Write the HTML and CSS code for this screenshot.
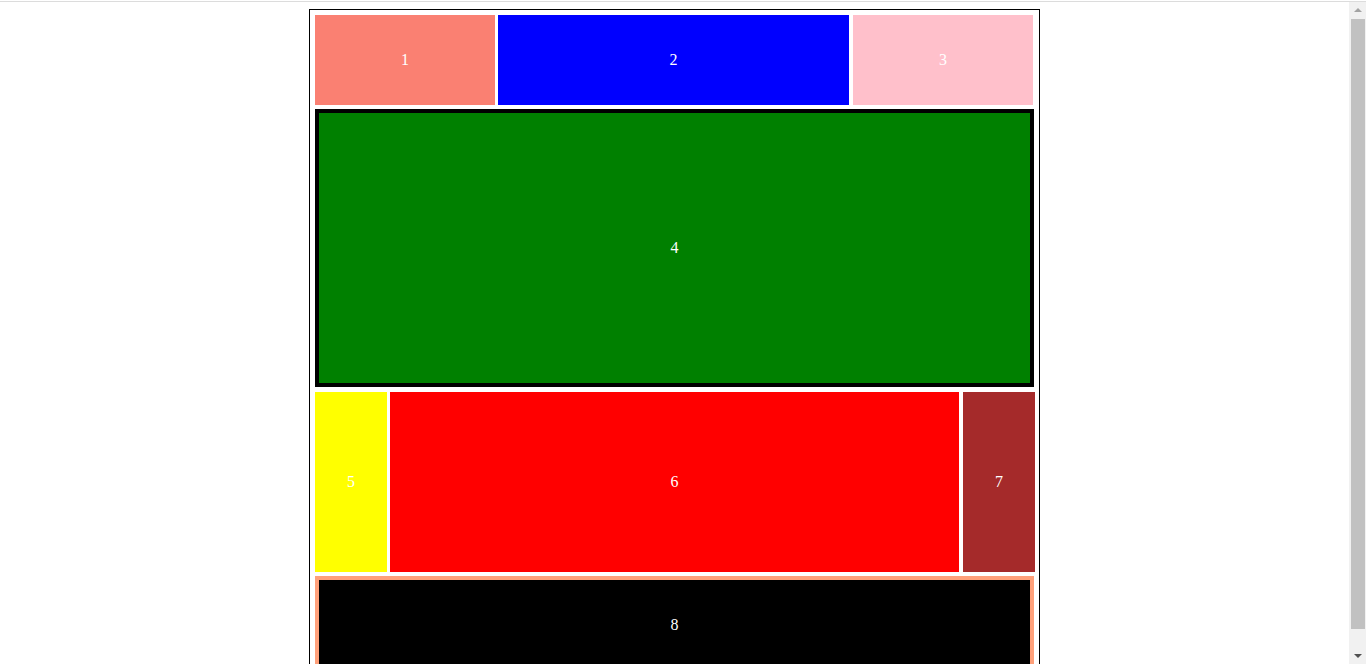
FILE: index.html
```html
<!DOCTYPE html>
<html lang="en">
<head>
    <meta charset="UTF-8">
    <meta name="viewport" content="width=device-width, initial-scale=1.0">
    <link rel="stylesheet" href="styles.css">
</head>
<body>

<!-- Box layout -->
<div class="wrapper">
    <div class="row row-top">
        <div class="box box-1">1</div>
        <div class="box box-2">2</div>
        <div class="box box-3">3</div>
    </div>
    <div class="box box-4">4</div>
    <div class="row row-mid">
        <div class="box box-5">5</div>
        <div class="box box-6">6</div>
        <div class="box box-7">7</div>
    </div>
    <div class="box box-8">8</div>
</div>

<!-- Scrollbar look-alike -->
<div class="scrollbar">
    <div class="arrow arrow-up"></div>
    <div class="thumb"></div>
    <div class="arrow arrow-down"></div>
</div>

</body>
</html>
```

FILE: styles.css
```css
html {
    border-top: 1px solid #dcdcdc;
    margin-top: 1px;
}

body {
    margin: 7px 25px 8px 8px;
    font-family: "Liberation Serif", "Times New Roman", serif;
    font-size: 16px;
    color: white;
}

/* Outer frame */
.wrapper {
    width: 719px;
    margin: 0 auto;
    padding: 5px;
    border: 1px solid black;
    display: flex;
    flex-direction: column;
}

.row {
    display: flex;
}

.box {
    display: flex;
    align-items: center;
    justify-content: center;
    box-sizing: border-box;
}

/* Top row */
.row-top {
    height: 90px;
}
.box-1 {
    width: 180px;
    background-color: salmon;
}
.box-2 {
    width: 351px;
    margin-left: 3px;
    background-color: blue;
}
.box-3 {
    width: 180px;
    margin-left: 4px;
    background-color: pink;
}

/* Big green box */
.box-4 {
    margin-top: 4px;
    width: 719px;
    height: 278px;
    border: 4px solid black;
    background-color: green;
}

/* Middle row */
.row-mid {
    margin-top: 5px;
    height: 180px;
    width: 720px;
}
.box-5 {
    width: 72px;
    background-color: yellow;
}
.box-6 {
    width: 569px;
    margin-left: 3px;
    background-color: red;
}
.box-7 {
    width: 72px;
    margin-left: 4px;
    background-color: brown;
}

/* Bottom box */
.box-8 {
    margin-top: 4px;
    width: 719px;
    height: 98px;
    border: 4px solid lightsalmon;
    background-color: black;
}

/* Scrollbar look-alike */
.scrollbar {
    position: fixed;
    top: 2px;
    right: 0;
    bottom: 0;
    width: 17px;
    background-color: #f1f1f1;
    display: flex;
    flex-direction: column;
    align-items: center;
}
.thumb {
    flex: 1;
    width: 14px;
    margin: 0 0 0 1px;
    background-color: #c1c1c1;
}
.arrow {
    width: 0;
    height: 0;
    border-left: 4px solid transparent;
    border-right: 4px solid transparent;
}
.arrow-up {
    margin: 6px 0 7px;
    border-bottom: 4px solid #a3a3a3;
}
.arrow-down {
    margin: 25px 0 6px;
    border-top: 4px solid #505050;
}
```
